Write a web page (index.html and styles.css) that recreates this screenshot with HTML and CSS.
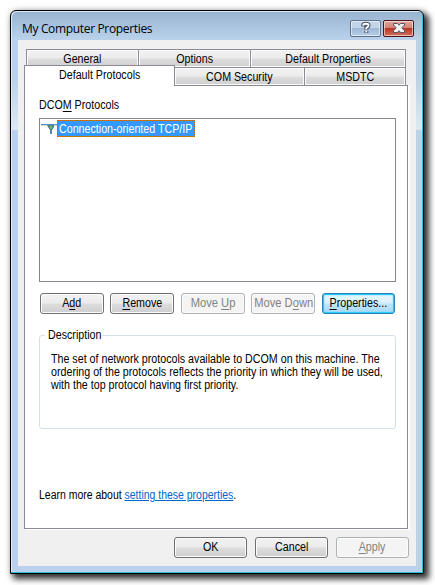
FILE: index.html
```
<!DOCTYPE html>
<html lang="en">
<head>
<meta charset="utf-8">
<title>My Computer Properties</title>
<link rel="stylesheet" href="styles.css">
</head>
<body>
<main class="window">
  <header class="titlebar">
    <h1>My Computer Properties</h1>
    <button class="caption help" aria-label="Help"><svg width="30" height="16" viewBox="0 0 30 16"><path d="M12.3 6.5V5Q12.3 3.7 15 3.7T17.5 5.4Q17.5 6.8 15.3 8V9.8M15.3 11V13" fill="none" stroke="#4a5366" stroke-width="4"/><path d="M12.3 5.8V5Q12.3 3.7 15 3.7T17.5 5.4Q17.5 6.8 15.3 8V9.5M15.3 11V12.5" fill="none" stroke="#fff" stroke-width="1.9"/></svg></button>
    <button class="caption close" aria-label="Close"><svg width="30" height="16" viewBox="0 0 30 16"><path d="M9.5 3.5H13.5L15 5.2L16.5 3.5H20.5V5L17.8 7.8L20.5 10.7V12.5H16.5L15 10.7L13.5 12.5H9.5V10.7L12.2 7.8L9.5 5Z" fill="#f4f4f5" stroke="#555565"/></svg></button>
  </header>
  <div class="client">
    <nav class="tabs back">
      <div class="tab t-general"><span class="cap">General</span></div><div class="tab t-options"><span class="cap">Options</span></div><div class="tab t-default"><span class="cap">Default Properties</span></div>
    </nav>
    <nav class="tabs front">
      <div class="tab active"><span class="cap">Default Protocols</span></div><div class="tab t-com"><span class="cap">COM Security</span></div><div class="tab t-msdtc"><span class="cap">MSDTC</span></div>
    </nav>
    <section class="page">
      <div class="label narrow">DCO<u>M</u> Protocols</div>
      <div class="list">
        <div class="item">
          <svg width="17" height="13" viewBox="0 0 17 13"><path d="M0 2.5H17" stroke="#5a8fc5"/><path d="M0 3.5H17" stroke="#a8c8ca" stroke-width=".6"/><path d="M6 3H13V5L11 8V12H9V8L7 5Z" fill="#4f8185"/><path d="M9 4H11V6.5H9Z" fill="#75c65c"/><path d="M10 8V12" stroke="#5b8fd0"/></svg>
          <div class="selected"><div class="narrow">Connection-oriented TCP/IP</div></div>
        </div>
      </div>
      <div class="actions">
        <button class="btn"><span class="cap">A<u>d</u>d</span></button>
        <button class="btn"><span class="cap"><u>R</u>emove</span></button>
        <button class="btn disabled"><span class="cap wide">Move <u>U</u>p</span></button>
        <button class="btn disabled"><span class="cap wide">Move D<u>o</u>wn</span></button>
        <button class="btn focused"><span class="cap"><u>P</u>roperties...</span></button>
      </div>
      <fieldset class="group">
        <legend><div class="narrow">Description</div></legend>
        <p class="narrow">The set of network protocols available to DCOM on this machine. The<br>ordering of the protocols reflects the priority in which they will be used,<br>with the top protocol having first priority.</p>
      </fieldset>
      <div class="learn narrow">Learn more about <a>setting these properties</a>.</div>
    </section>
    <footer class="footer">
      <button class="btn"><span class="cap">OK</span></button>
      <button class="btn"><span class="cap">Cancel</span></button>
      <button class="btn disabled"><span class="cap"><u>A</u>pply</span></button>
    </footer>
  </div>
</main>
</body>
</html>
```
FILE: styles.css
```
* { box-sizing: border-box; }
body {
  margin: 0; padding: 10px 11px 11px 10px; width: 435px; height: 585px;
  background: #fff; overflow: hidden; color: #000;
  font: 12px/13px "Liberation Sans", Arial, sans-serif;
}
button { font: inherit; padding: 0; color: inherit; }
/* Condensed interface lettering */
.narrow { transform: scaleX(.89); transform-origin: 0 0; white-space: nowrap; }
.cap { display: inline-block; transform: scaleX(.89); white-space: nowrap; }
.cap.wide { transform: scaleX(.93); }
.window {
  width: 414px; height: 564px; padding: 0 7px 7px;
  border: 1px solid #000; border-radius: 6px 6px 0 0;
  background: linear-gradient(#98b3d0, #b9d1ea 28px, #b9d1ea 65px, #dce8f5 118px, #b9d1ea 120px);
  box-shadow: inset -1px -1px #35bcd8, inset 1px 1px #dce9f6, 4px 4px 6px 1px rgba(0,0,0,.8), 0 0 7px rgba(0,0,0,.18);
}
.titlebar { display: flex; height: 29px; padding: 9px 2px 0 4px; }
h1 { margin: 0; flex: 1; font: 12px/18px "Open Sans", sans-serif; letter-spacing: -.34px; }
.caption { width: 31px; height: 17px; margin-left: 2px; border: 1px solid #5e718d; border-radius: 2px; box-shadow: inset 0 0 0 1px rgba(255,255,255,.55); overflow: hidden; }
.caption svg { display: block; margin-top: -1px; }
.help { background: linear-gradient(#c3d4e8 48%, #a0b8d3 50%, #b8cee7); }
.close { border-color: #4b1420; background: linear-gradient(#e3a698, #d08173 48%, #ba3624 50%, #d4705a); }
.client { width: 398px; height: 526px; padding: 9px 7px 0 6px; background: #f0f0f0; }
.tabs { display: flex; }
.back { height: 18px; margin: 0 3px 0 2px; }
.front { height: 18px; margin-right: 3px; position: relative; }
.tab { border: 1px solid #898c95; border-bottom: 0; background: linear-gradient(#f2f2f2, #ebebeb 49%, #dddddd 51%, #cfcfcf); box-shadow: inset 0 0 0 1px #fcfcfc; text-align: center; line-height: 19px; margin-right: -1px; }
.tab:last-child { margin-right: 0; }
.t-general { width: 113px; }
.t-options { width: 113px; }
.t-default { flex: 1; }
.active { width: 151px; height: 21px; margin-top: -2px; background: #fff; box-shadow: none; line-height: 19px; z-index: 1; }
.t-com { width: 131px; }
.t-msdtc { flex: 1; }
.page { width: 384px; height: 444px; border: 1px solid #898c95; background: #fff; padding: 13px 11px 0 14px; box-shadow: 2px 1px #fff; }
u { text-decoration: underline; text-decoration-thickness: 1px; text-underline-offset: 2px; text-decoration-skip-ink: none; }
.list { height: 164px; width: 357px; margin-top: 6px; border: 1px solid #828790; padding: 1px; }
.item { display: flex; height: 17px; align-items: center; }
.selected { width: 138px; height: 17px; padding: 0 1px; line-height: 16px; background: #3399ff; color: #fff; border: 1px dotted #cc6600; margin-left: -1px; }
.actions { display: flex; margin: 11px 0 0 1px; }
.btn { flex: none; height: 21px; width: 64px; margin-right: 6px; line-height: 19px; border: 1px solid #707070; border-radius: 3px; background: linear-gradient(#f2f2f2, #ebebeb 49%, #dddddd 51%, #cfcfcf); box-shadow: inset 0 0 0 1px #fcfcfc; white-space: nowrap; }
.actions .btn:nth-child(2), .actions .btn:nth-child(4) { margin-right: 7px; }
.actions .btn:last-child { width: 73px; margin: 0; }
.btn.disabled { color: #838383; border-color: #adb2b5; background: #f4f4f4; }
.btn.focused { border-color: #2c7fb5; background: linear-gradient(#eaf6fd, #d9f0fc 49%, #bee6fd 51%, #a7d9f5); box-shadow: inset 0 0 0 1px #25cbfb, inset 0 0 2px 1px #67dcff; }
.group { width: 357px; min-width: 0; height: 100px; margin: 15px 0 0; padding: 0 11px; border: 1px solid #d5dfe5; border-radius: 3px; }
legend { width: 57px; padding: 0 3px; margin-left: -6px; }
.group p { margin: 11px 0 0; }
.learn { margin-top: 60px; transform: scaleX(.872); }
.learn a { color: #0066cc; text-decoration: underline; }
.footer { display: flex; justify-content: flex-end; padding-top: 8px; }
.footer .btn { width: 73px; margin: 0 0 0 8px; }
```
